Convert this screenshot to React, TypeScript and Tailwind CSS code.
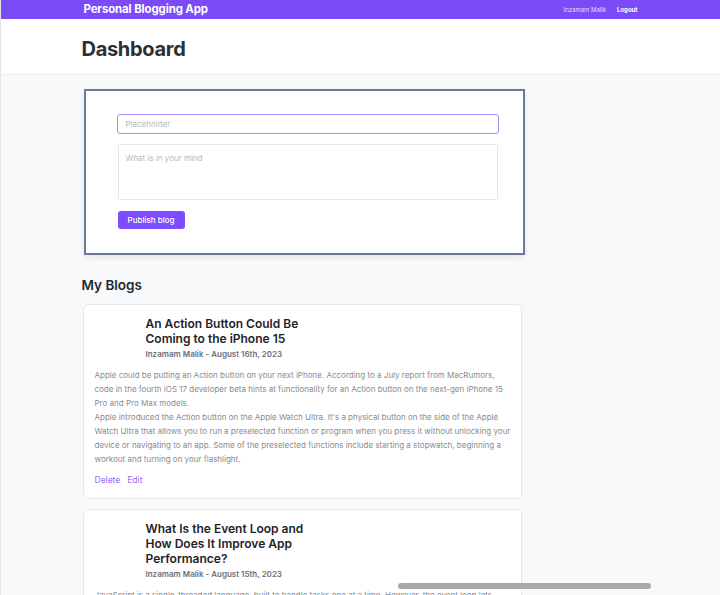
import React from "react";

const posts = [
  {
    title: "An Action Button Could Be Coming to the iPhone 15",
    meta: "Inzamam Malik - August 16th, 2023",
    body: [
      "Apple could be putting an Action button on your next iPhone. According to a July report from MacRumors, code in the fourth iOS 17 developer beta hints at functionality for an Action button on the next-gen iPhone 15 Pro and Pro Max models.",
      "Apple introduced the Action button on the Apple Watch Ultra. It's a physical button on the side of the Apple Watch Ultra that allows you to run a preselected function or program when you press it without unlocking your device or navigating to an app. Some of the preselected functions include starting a stopwatch, beginning a workout and turning on your flashlight.",
    ],
  },
  {
    title: "What Is the Event Loop and How Does It Improve App Performance?",
    meta: "Inzamam Malik - August 15th, 2023",
    body: [
      "JavaScript is a single-threaded language, built to handle tasks one at a time. However, the event loop lets JavaScript handle events and callbacks asynchronously, so that long-running tasks don't block the main thread and the app stays responsive.",
    ],
  },
];

export default function App() {
  return (
    <div
      className="relative h-[595px] w-[720px] overflow-hidden border-l border-[#e3e4e8] bg-[#f8f9fb]"
      style={{ fontFamily: "Inter, 'Noto Sans', sans-serif" }}
    >
      <nav className="h-[19px] bg-[#7b4bf8]">
        <div className="mx-auto flex h-full w-[558px] items-center justify-between pl-[2px]">
          <span className="text-[11.4px] font-bold tracking-[-0.1px] text-white">
            Personal Blogging App
          </span>
          <div className="flex items-center gap-[11px] pr-[2px] text-[6px]">
            <span className="text-[#e4dcff]">Inzamam Malik</span>
            <span className="font-bold text-white">Logout</span>
          </div>
        </div>
      </nav>
      <header className="h-[56px] border-b border-[#eceef2] bg-white">
        <div className="mx-auto w-[558px] pt-[18px]">
          <h1 className="text-[20px] font-bold leading-[24px] tracking-[-0.3px] text-[#2b2f36]">
            Dashboard
          </h1>
        </div>
      </header>
      <main className="mx-auto w-[558px] pt-[14px]">
        <div className="ml-[2px] w-[441px] border-2 border-[#6b7a9b] bg-white px-[31px] pb-[24px] pt-[23px] shadow-[0_3px_6px_rgba(0,0,0,0.08)]">
          <div className="flex h-[20px] w-[382px] items-center rounded-[3px] border-[1.5px] border-[#a98cfb] px-[8px] text-[8px] text-[#b8b9c0]">
            Placeholder
          </div>
          <div className="ml-[1px] mt-[10px] h-[56px] w-[380px] rounded-[2px] border border-[#e5e7eb] px-[7px] pt-[7px] text-[8px] text-[#b8b9c0]">
            What is in your mind
          </div>
          <button className="ml-[1px] mt-[11px] flex h-[18px] w-[67px] items-center justify-center rounded-[3px] bg-[#7c4dff] text-[8px] font-medium text-white">
            Publish blog
          </button>
        </div>
        <h2 className="mt-[21px] text-[13.5px] font-semibold leading-[18px] text-[#1f2733]">My Blogs</h2>
        <div className="mt-[10px] flex flex-col gap-[10px]">
          {posts.map((p, i) => (
            <div
              key={i}
              className="ml-[1px] w-[439px] rounded-[5px] border border-[#e5e7eb] bg-white pb-[11px] pl-[11px] pr-[8px] pt-[11px]"
            >
              <div className="pl-[51px]">
                <h3 className="max-w-[170px] text-[12px] font-semibold leading-[15px] text-[#1f2328]">
                  {p.title}
                </h3>
                <div className="mt-[3px] text-[8px] font-semibold leading-[10px] text-[#6b7079]">
                  {p.meta}
                </div>
              </div>
              <div className="mt-[9px] text-[8px] leading-[14px] text-[#878b94]">
                {p.body.map((b, j) => (
                  <p key={j}>{b}</p>
                ))}
              </div>
              <div className="mt-[8px] flex gap-[7px] text-[8.5px] text-[#9a6bf7]">
                <span>Delete</span>
                <span>Edit</span>
              </div>
            </div>
          ))}
        </div>
      </main>
      <div className="absolute bottom-[6px] left-[397px] h-[6px] w-[253px] rounded-full bg-[#a9a9a9]" />
    </div>
  );
}
